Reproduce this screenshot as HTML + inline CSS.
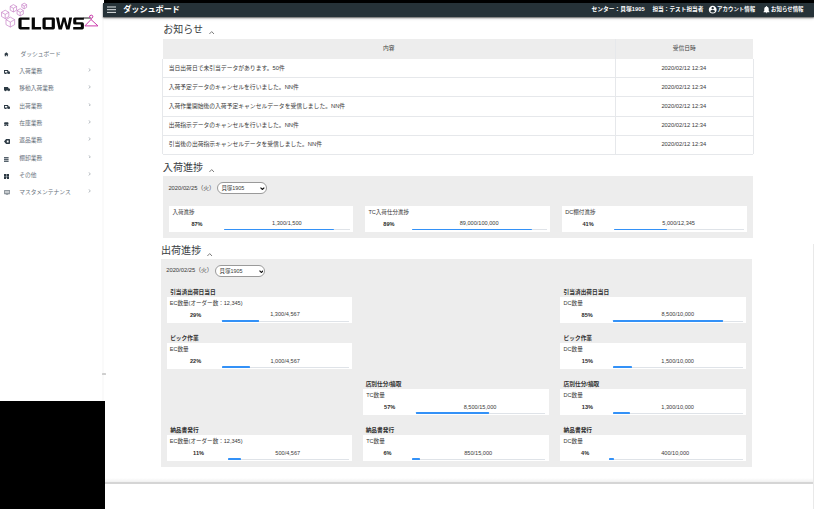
<!DOCTYPE html>
<html lang="ja">
<head>
<meta charset="utf-8">
<title>ダッシュボード</title>
<style>
html,body{margin:0;padding:0;}
body{width:814px;height:509px;overflow:hidden;position:relative;background:#fff;font-family:"Liberation Sans","Noto Sans CJK JP",sans-serif;color:#3a3a3a;}
.sidebar{position:absolute;left:0;top:0;width:103px;height:509px;background:#fff;}
.tl{position:absolute;left:0;top:0;width:814px;height:509px;overflow:hidden;}
.t{position:absolute;white-space:nowrap;line-height:1;margin-top:0.04em;font-family:"Liberation Sans","Noto Sans CJK JP",sans-serif;color:#3a3a3a;}
.t.s{color:#68727c;}
.t.w{color:#fff;}
.t.h{color:#393d43;}
.t.th{color:#444;}
.t.r{color:#3a3a3a;}
.t.l{color:#383838;}
.t.p{color:#2a2a2a;}
.t.b{color:#303030;}
</style>
</head>
<body>
<div class="sidebar">
<svg class="logo" width="104" height="36" viewBox="0 0 104 36" style="position:absolute;left:0;top:0">
<path d="M13.40 4.60 L16.60 6.45 V10.15 L13.40 12.00 L10.20 10.15 V6.45 Z M10.20 6.45 L13.40 8.30 L16.60 6.45 M13.40 8.30 V12.00 M5.20 10.20 L8.84 12.30 V16.50 L5.20 18.60 L1.56 16.50 V12.30 Z M1.56 12.30 L5.20 14.40 L8.84 12.30 M5.20 14.40 V18.60 M20.20 8.70 L23.32 10.50 V14.10 L20.20 15.90 L17.08 14.10 V10.50 Z M17.08 10.50 L20.20 12.30 L23.32 10.50 M20.20 12.30 V15.90 M10.30 17.10 L14.63 19.60 V24.60 L10.30 27.10 L5.97 24.60 V19.60 Z M5.97 19.60 L10.30 22.10 L14.63 19.60 M10.30 22.10 V27.10 M24.20 3.20 L26.62 4.60 V7.40 L24.20 8.80 L21.78 7.40 V4.60 Z M21.78 4.60 L24.20 6.00 L26.62 4.60 M24.20 6.00 V8.80" fill="none" stroke="#bd6cbd" stroke-width="0.6" stroke-linejoin="round"/>
<g fill="#070707" fill-rule="evenodd">
<path d="M20.2 17.5 H29.5 V19.8 H21.6 V27.1 H29.5 V29.4 H20.2 Q18.4 29.4 18.4 27.6 V19.3 Q18.4 17.5 20.2 17.5 Z"/>
<path d="M31.7 17.5 H34.9 V27.1 H41.1 V29.4 H31.7 Z"/>
<path d="M44.2 17.5 H53.2 Q54.9 17.5 54.9 19.2 V27.7 Q54.9 29.4 53.2 29.4 H44.2 Q42.5 29.4 42.5 27.7 V19.2 Q42.5 17.5 44.2 17.5 Z M45.7 19.8 V27.1 H51.7 V19.8 Z"/>
<path d="M56 17.5 H58.9 L60.5 26 L62.7 17.5 H65.4 L67.6 26 L69.2 17.5 H72.1 L69.5 29.4 H66.2 L64.05 21.4 L61.9 29.4 H58.6 Z"/>
<path d="M74.8 17.5 H83.9 V19.8 H76.3 V22.3 H82.3 Q83.9 22.3 83.9 23.9 V27.8 Q83.9 29.4 82.3 29.4 H73.2 V27.1 H80.8 V24.6 H74.8 Q73.2 24.6 73.2 23 V19.1 Q73.2 17.5 74.8 17.5 Z"/>
</g>
<path d="M83.5 18.0 H90.8" stroke="#111" stroke-width="0.9" fill="none"/>
<path d="M89.5 17.4 Q89.1 15.2 91.2 15.1 Q93.1 15.2 92.9 16.9 Q92.7 18.1 91 18.4 V19.5 L84.9 25.9 H98 L91 19.5" fill="none" stroke="#cb3cab" stroke-width="1.0" stroke-linecap="round" stroke-linejoin="round"/>
</svg>
<svg style="position:absolute;left:4.40px;top:52.15px" width="4.6" height="4.6" viewBox="0 0 12 12" preserveAspectRatio="none"><path fill="#2d3a44" d="M6 0.6 L0.2 6 H2 V11.4 H5 V7.8 H7 V11.4 H10 V6 H11.8 Z"/></svg>
<svg style="position:absolute;left:3.85px;top:70.10px" width="6.1" height="4.4" viewBox="0 0 12.2 8.8" preserveAspectRatio="none"><path fill="#2d3a44" fill-rule="evenodd" d="M0 0 H8.4 V2.6 H10.4 L12.2 4.8 V7.2 H11.2 A1.45 1.45 0 0 1 8.3 7.2 H4.5 A1.45 1.45 0 0 1 1.6 7.2 H0 Z M1.9 1.9 V4.9 H6.5 V1.9 Z"/></svg>
<svg style="position:absolute;left:88.0px;top:67.90px" width="3.0" height="3.8" viewBox="0 0 6 8"><path d="M1.2 0.8 L4.8 4 L1.2 7.2" fill="none" stroke="#9aa2a9" stroke-width="1.5"/></svg>
<svg style="position:absolute;left:3.85px;top:87.40px" width="6.1" height="4.4" viewBox="0 0 12.2 8.8" preserveAspectRatio="none"><path fill="#2d3a44" d="M0 0 H8.4 V2.6 H10.4 L12.2 4.8 V7.2 H11.2 A1.45 1.45 0 0 1 8.3 7.2 H4.5 A1.45 1.45 0 0 1 1.6 7.2 H0 Z"/></svg>
<svg style="position:absolute;left:88.0px;top:85.20px" width="3.0" height="3.8" viewBox="0 0 6 8"><path d="M1.2 0.8 L4.8 4 L1.2 7.2" fill="none" stroke="#9aa2a9" stroke-width="1.5"/></svg>
<svg style="position:absolute;left:3.85px;top:104.80px" width="6.1" height="4.4" viewBox="0 0 12.2 8.8" preserveAspectRatio="none"><path fill="#2d3a44" fill-rule="evenodd" d="M0 0 H8.4 V2.6 H10.4 L12.2 4.8 V7.2 H11.2 A1.45 1.45 0 0 1 8.3 7.2 H4.5 A1.45 1.45 0 0 1 1.6 7.2 H0 Z M1.9 1.9 V4.9 H6.5 V1.9 Z"/></svg>
<svg style="position:absolute;left:88.0px;top:102.60px" width="3.0" height="3.8" viewBox="0 0 6 8"><path d="M1.2 0.8 L4.8 4 L1.2 7.2" fill="none" stroke="#9aa2a9" stroke-width="1.5"/></svg>
<svg style="position:absolute;left:4.00px;top:121.80px" width="4.6" height="4.6" viewBox="0 0 12 12" preserveAspectRatio="none"><path fill="#2d3a44" d="M1.2 0.4 H10.8 L12 5 H0 Z M0.9 5.6 H11.1 V11.6 H7.4 V8.6 H4.6 V11.6 H0.9 Z"/></svg>
<svg style="position:absolute;left:88.0px;top:119.80px" width="3.0" height="3.8" viewBox="0 0 6 8"><path d="M1.2 0.8 L4.8 4 L1.2 7.2" fill="none" stroke="#9aa2a9" stroke-width="1.5"/></svg>
<svg style="position:absolute;left:3.60px;top:139.25px" width="6.0" height="4.9" viewBox="0 0 12 10" preserveAspectRatio="none"><path fill="#2d3a44" fill-rule="evenodd" d="M4.2 0 H10.6 Q12 0 12 1.4 V8.6 Q12 10 10.6 10 H4.2 L0 5 Z M5.6 3 V7 H9.2 V3 Z"/></svg>
<svg style="position:absolute;left:88.0px;top:137.20px" width="3.0" height="3.8" viewBox="0 0 6 8"><path d="M1.2 0.8 L4.8 4 L1.2 7.2" fill="none" stroke="#9aa2a9" stroke-width="1.5"/></svg>
<svg style="position:absolute;left:4.30px;top:156.50px" width="4.6" height="5.0" viewBox="0 0 10 10" preserveAspectRatio="none"><path fill="#56626c" d="M0 0 H10 V2.6 H0 Z M0 3.7 H10 V6.3 H0 Z M0 7.4 H10 V10 H0 Z"/></svg>
<svg style="position:absolute;left:88.0px;top:154.50px" width="3.0" height="3.8" viewBox="0 0 6 8"><path d="M1.2 0.8 L4.8 4 L1.2 7.2" fill="none" stroke="#9aa2a9" stroke-width="1.5"/></svg>
<svg style="position:absolute;left:4.10px;top:173.80px" width="5.3" height="5.2" viewBox="0 0 12 12" preserveAspectRatio="none"><path fill="#2d3a44" d="M0 0 H5.5 V5.5 H0 Z M6.5 0 H12 V5.5 H6.5 Z M0 6.5 H5.5 V12 H0 Z M6.5 6.5 H12 V12 H6.5 Z"/></svg>
<svg style="position:absolute;left:88.0px;top:171.90px" width="3.0" height="3.8" viewBox="0 0 6 8"><path d="M1.2 0.8 L4.8 4 L1.2 7.2" fill="none" stroke="#9aa2a9" stroke-width="1.5"/></svg>
<svg style="position:absolute;left:3.80px;top:190.30px" width="6.1" height="5.2" viewBox="0 0 12 10" preserveAspectRatio="none"><path fill="#8f979e" fill-rule="evenodd" d="M0.8 0 H11.2 Q12 0 12 0.8 V7.4 Q12 8.2 11.2 8.2 H7.4 V9.2 H9 V10 H3 V9.2 H4.6 V8.2 H0.8 Q0 8.2 0 7.4 V0.8 Q0 0 0.8 0 Z M2 2 V3.1 H10 V2 Z M2 4.4 V5.5 H10 V4.4 Z"/></svg>
<svg style="position:absolute;left:88.0px;top:189.30px" width="3.0" height="3.8" viewBox="0 0 6 8"><path d="M1.2 0.8 L4.8 4 L1.2 7.2" fill="none" stroke="#9aa2a9" stroke-width="1.5"/></svg>
</div>
<div style="position:absolute;left:102.40px;top:19.00px;width:2.00px;height:382.00px;background:linear-gradient(to right,#ffffff,#f5f5f5,#ffffff);"></div>
<div style="position:absolute;left:102.30px;top:373.30px;width:3.40px;height:1.50px;background:#cfcfcf;border-radius:0.5px;"></div>
<div style="position:absolute;left:103.00px;top:2.70px;width:711.00px;height:13.90px;background:#263238;box-shadow:0 0.5px 1.2px rgba(0,0,0,0.5),0 1.5px 3px rgba(0,0,0,0.18);"></div>
<div style="position:absolute;left:103.60px;top:0.00px;width:710.40px;height:2.80px;background:#000;"></div>
<svg style="position:absolute;left:107px;top:5.8px" width="9.4" height="7.4" viewBox="0 0 9.4 7.4"><path d="M0 1 H9.2 M0 3.7 H9.2 M0 6.4 H9.2" stroke="#eceff1" stroke-width="0.95" fill="none"/></svg>
<svg style="position:absolute;left:707.9px;top:4.85px" width="9.4" height="9.4" viewBox="0 0 24 24"><path fill="#fff" d="M12 2C6.48 2 2 6.48 2 12s4.48 10 10 10 10-4.48 10-10S17.52 2 12 2zm0 3c1.66 0 3 1.34 3 3s-1.34 3-3 3-3-1.34-3-3 1.34-3 3-3zm0 14.2c-2.5 0-4.71-1.28-6-3.22.03-1.99 4-3.08 6-3.08 1.99 0 5.97 1.09 6 3.08-1.29 1.94-3.5 3.22-6 3.22z"/></svg>
<svg style="position:absolute;left:762.15px;top:5.4px" width="9" height="9" viewBox="0 0 24 24"><path fill="#fff" d="M12 22c1.1 0 2-.9 2-2h-4c0 1.1.89 2 2 2zm6-6v-5c0-3.07-1.64-5.64-4.5-6.32V4c0-.83-.67-1.500-1.500-1.500s-1.500.67-1.500 1.500v.68C7.630 5.360 6 7.920 6 11v5l-2 2v1h16v-1l-2-2z"/></svg>
<svg style="position:absolute;left:209.30px;top:31.40px" width="5.4" height="3.4" viewBox="0 0 5.4 3.4"><path d="M0.4 3 L2.7 0.6 L5 3" fill="none" stroke="#505050" stroke-width="0.75"/></svg>
<svg style="position:absolute;left:209.30px;top:169.20px" width="5.4" height="3.4" viewBox="0 0 5.4 3.4"><path d="M0.4 3 L2.7 0.6 L5 3" fill="none" stroke="#505050" stroke-width="0.75"/></svg>
<svg style="position:absolute;left:207.30px;top:252.80px" width="5.4" height="3.4" viewBox="0 0 5.4 3.4"><path d="M0.4 3 L2.7 0.6 L5 3" fill="none" stroke="#505050" stroke-width="0.75"/></svg>
<div style="position:absolute;left:162.50px;top:38.80px;width:590.90px;height:19.80px;background:#ededed;"></div>
<div style="position:absolute;left:162.50px;top:77.35px;width:590.90px;height:0.50px;background:#e6e8eb;"></div>
<div style="position:absolute;left:162.50px;top:96.45px;width:590.90px;height:0.50px;background:#e6e8eb;"></div>
<div style="position:absolute;left:162.50px;top:115.55px;width:590.90px;height:0.50px;background:#e6e8eb;"></div>
<div style="position:absolute;left:162.50px;top:134.75px;width:590.90px;height:0.50px;background:#e6e8eb;"></div>
<div style="position:absolute;left:162.50px;top:153.95px;width:590.90px;height:0.50px;background:#e6e8eb;"></div>
<div style="position:absolute;left:615.05px;top:38.80px;width:0.50px;height:115.40px;background:#e6e8eb;"></div>
<div style="position:absolute;left:753.15px;top:58.60px;width:0.50px;height:95.60px;background:#e6e8eb;"></div>
<div style="position:absolute;left:162.25px;top:58.60px;width:0.50px;height:95.60px;background:#e6e8eb;"></div>
<div style="position:absolute;left:162.50px;top:176.30px;width:590.60px;height:61.40px;background:#ededed;"></div>
<div style="position:absolute;left:217.20px;top:181.80px;width:49.40px;height:12.70px;box-sizing:border-box;border:0.5px solid #9a9a9a;border-radius:6.5px;background:#fff"></div>
<svg style="position:absolute;left:260.30px;top:186.95px" width="4.8" height="3.2" viewBox="0 0 4.8 3.2"><path d="M0.5 0.6 L2.4 2.5 L4.3 0.6" fill="none" stroke="#111" stroke-width="1.15"/></svg>
<div style="position:absolute;left:168.70px;top:205.50px;width:184.40px;height:26.20px;background:#fff;"></div>
<div style="position:absolute;left:224.30px;top:229.00px;width:125.70px;height:0.60px;background:#dfe3e8;"></div>
<div style="position:absolute;left:224.30px;top:228.55px;width:109.36px;height:1.50px;background:#3391f7;border-radius:0.4px;"></div>
<div style="position:absolute;left:364.70px;top:205.50px;width:185.30px;height:26.20px;background:#fff;"></div>
<div style="position:absolute;left:411.60px;top:229.00px;width:135.20px;height:0.60px;background:#dfe3e8;"></div>
<div style="position:absolute;left:411.60px;top:228.55px;width:120.33px;height:1.50px;background:#3391f7;border-radius:0.4px;"></div>
<div style="position:absolute;left:561.90px;top:205.50px;width:185.10px;height:26.20px;background:#fff;"></div>
<div style="position:absolute;left:614.00px;top:229.00px;width:129.70px;height:0.60px;background:#dfe3e8;"></div>
<div style="position:absolute;left:614.00px;top:228.55px;width:53.18px;height:1.50px;background:#3391f7;border-radius:0.4px;"></div>
<div style="position:absolute;left:160.50px;top:259.30px;width:591.60px;height:207.70px;background:#ededed;"></div>
<div style="position:absolute;left:215.30px;top:264.90px;width:49.50px;height:12.50px;box-sizing:border-box;border:0.5px solid #9a9a9a;border-radius:6.5px;background:#fff"></div>
<svg style="position:absolute;left:258.50px;top:269.95px" width="4.8" height="3.2" viewBox="0 0 4.8 3.2"><path d="M0.5 0.6 L2.4 2.5 L4.3 0.6" fill="none" stroke="#111" stroke-width="1.15"/></svg>
<div style="position:absolute;left:166.80px;top:297.00px;width:184.80px;height:26.10px;background:#fff;"></div>
<div style="position:absolute;left:222.20px;top:320.50px;width:126.40px;height:0.60px;background:#dfe3e8;"></div>
<div style="position:absolute;left:222.20px;top:320.05px;width:36.66px;height:1.50px;background:#3391f7;border-radius:0.4px;"></div>
<div style="position:absolute;left:166.80px;top:343.10px;width:184.80px;height:26.10px;background:#fff;"></div>
<div style="position:absolute;left:222.20px;top:366.60px;width:126.40px;height:0.60px;background:#dfe3e8;"></div>
<div style="position:absolute;left:222.20px;top:366.15px;width:27.81px;height:1.50px;background:#3391f7;border-radius:0.4px;"></div>
<div style="position:absolute;left:166.80px;top:435.30px;width:184.80px;height:26.10px;background:#fff;"></div>
<div style="position:absolute;left:228.00px;top:458.80px;width:120.60px;height:0.60px;background:#dfe3e8;"></div>
<div style="position:absolute;left:228.00px;top:458.35px;width:13.27px;height:1.50px;background:#3391f7;border-radius:0.4px;"></div>
<div style="position:absolute;left:363.00px;top:389.20px;width:185.90px;height:26.10px;background:#fff;"></div>
<div style="position:absolute;left:415.70px;top:412.70px;width:129.20px;height:0.60px;background:#dfe3e8;"></div>
<div style="position:absolute;left:415.70px;top:412.25px;width:73.64px;height:1.50px;background:#3391f7;border-radius:0.4px;"></div>
<div style="position:absolute;left:363.00px;top:435.30px;width:185.90px;height:26.10px;background:#fff;"></div>
<div style="position:absolute;left:411.60px;top:458.80px;width:133.30px;height:0.60px;background:#dfe3e8;"></div>
<div style="position:absolute;left:411.60px;top:458.35px;width:8.00px;height:1.50px;background:#3391f7;border-radius:0.4px;"></div>
<div style="position:absolute;left:560.00px;top:297.00px;width:186.00px;height:26.10px;background:#fff;"></div>
<div style="position:absolute;left:613.00px;top:320.50px;width:129.70px;height:0.60px;background:#dfe3e8;"></div>
<div style="position:absolute;left:613.00px;top:320.05px;width:110.25px;height:1.50px;background:#3391f7;border-radius:0.4px;"></div>
<div style="position:absolute;left:560.00px;top:343.10px;width:186.00px;height:26.10px;background:#fff;"></div>
<div style="position:absolute;left:613.00px;top:366.60px;width:129.70px;height:0.60px;background:#dfe3e8;"></div>
<div style="position:absolute;left:613.00px;top:366.15px;width:19.46px;height:1.50px;background:#3391f7;border-radius:0.4px;"></div>
<div style="position:absolute;left:560.00px;top:389.20px;width:186.00px;height:26.10px;background:#fff;"></div>
<div style="position:absolute;left:613.00px;top:412.70px;width:129.70px;height:0.60px;background:#dfe3e8;"></div>
<div style="position:absolute;left:613.00px;top:412.25px;width:16.86px;height:1.50px;background:#3391f7;border-radius:0.4px;"></div>
<div style="position:absolute;left:560.00px;top:435.30px;width:186.00px;height:26.10px;background:#fff;"></div>
<div style="position:absolute;left:608.70px;top:458.80px;width:134.00px;height:0.60px;background:#dfe3e8;"></div>
<div style="position:absolute;left:608.70px;top:458.35px;width:5.36px;height:1.50px;background:#3391f7;border-radius:0.4px;"></div>
<div style="position:absolute;left:105.00px;top:478.20px;width:708.00px;height:4.20px;background:linear-gradient(to bottom,rgba(0,0,0,0),rgba(0,0,0,0.06));"></div>
<div style="position:absolute;left:105.00px;top:482.30px;width:708.00px;height:1.60px;background:#d5d5d5;"></div>
<div style="position:absolute;left:812.90px;top:244.00px;width:0.90px;height:265.00px;background:#e9e9e9;"></div>
<div style="position:absolute;left:0.00px;top:401.00px;width:105.00px;height:108.00px;background:#000;"></div>
<div class="tl">
<div class="t s" style="left:20.5px;top:51.3px;font-size:5.75px;">ダッシュボード</div>
<div class="t s" style="left:19.2px;top:68.8px;font-size:5.75px;">入荷業務</div>
<div class="t s" style="left:19.2px;top:86.1px;font-size:5.75px;">移動入荷業務</div>
<div class="t s" style="left:19.2px;top:103.5px;font-size:5.75px;">出荷業務</div>
<div class="t s" style="left:19.2px;top:120.7px;font-size:5.75px;">在庫業務</div>
<div class="t s" style="left:19.2px;top:138.1px;font-size:5.75px;">返品業務</div>
<div class="t s" style="left:19.2px;top:155.4px;font-size:5.75px;">棚卸業務</div>
<div class="t s" style="left:19.2px;top:172.8px;font-size:5.75px;">その他</div>
<div class="t s" style="left:19.2px;top:190.2px;font-size:5.75px;">マスタメンテナンス</div>
<div class="t w" style="left:123.2px;top:5.5px;font-size:8.12px;font-weight:bold;">ダッシュボード</div>
<div class="t w" style="left:591.6px;top:6.7px;font-size:5.75px;font-weight:bold;">センター：貝塚1905</div>
<div class="t w" style="left:652.4px;top:6.8px;font-size:5.68px;font-weight:bold;">担当：テスト担当者</div>
<div class="t w" style="left:717.1px;top:6.9px;font-size:5.45px;font-weight:bold;">アカウント情報</div>
<div class="t w" style="left:771.0px;top:6.9px;font-size:5.45px;font-weight:bold;">お知らせ情報</div>
<div class="t h" style="left:163.2px;top:24.9px;font-size:10.00px;">お知らせ</div>
<div class="t h" style="left:162.8px;top:162.5px;font-size:10.10px;">入荷進捗</div>
<div class="t h" style="left:160.9px;top:245.9px;font-size:10.10px;">出荷進捗</div>
<div class="t th" style="left:383.1px;top:46.0px;font-size:5.75px;">内容</div>
<div class="t th" style="left:672.8px;top:46.0px;font-size:5.75px;">受信日時</div>
<div class="t r" style="left:168.7px;top:65.3px;font-size:5.80px;">当日出荷日で未引当データがあります。50件</div>
<div class="t r" style="left:661.4px;top:65.4px;font-size:5.78px;">2020/02/12 12:34</div>
<div class="t r" style="left:168.7px;top:84.3px;font-size:5.80px;">入荷予定データのキャンセルを行いました。NN件</div>
<div class="t r" style="left:661.4px;top:84.5px;font-size:5.78px;">2020/02/12 12:34</div>
<div class="t r" style="left:168.7px;top:103.4px;font-size:5.80px;">入荷作業開始後の入荷予定キャンセルデータを受信しました。NN件</div>
<div class="t r" style="left:661.4px;top:103.6px;font-size:5.78px;">2020/02/12 12:34</div>
<div class="t r" style="left:168.7px;top:122.6px;font-size:5.80px;">出荷指示データのキャンセルを行いました。NN件</div>
<div class="t r" style="left:661.4px;top:122.7px;font-size:5.78px;">2020/02/12 12:34</div>
<div class="t r" style="left:168.7px;top:141.8px;font-size:5.80px;">引当後の出荷指示キャンセルデータを受信しました。NN件</div>
<div class="t r" style="left:661.4px;top:141.9px;font-size:5.78px;">2020/02/12 12:34</div>
<div class="t r" style="left:168.4px;top:185.5px;font-size:5.80px;">2020/02/25（火）</div>
<div class="t r" style="left:221.4px;top:185.7px;font-size:5.45px;">貝塚1905</div>
<div class="t l" style="left:172.4px;top:209.3px;font-size:5.55px;">入荷進捗</div>
<div class="t p" style="left:191.4px;top:221.3px;font-size:5.60px;font-weight:bold;">87%</div>
<div class="t r" style="left:272.1px;top:220.7px;font-size:5.60px;">1,300/1,500</div>
<div class="t l" style="left:368.4px;top:209.3px;font-size:5.55px;">TC入荷仕分進捗</div>
<div class="t p" style="left:383.3px;top:221.3px;font-size:5.60px;font-weight:bold;">89%</div>
<div class="t r" style="left:459.7px;top:220.7px;font-size:5.60px;">89,000/100,000</div>
<div class="t l" style="left:565.3px;top:209.3px;font-size:5.55px;">DC棚付進捗</div>
<div class="t p" style="left:582.5px;top:221.3px;font-size:5.60px;font-weight:bold;">41%</div>
<div class="t r" style="left:662.3px;top:220.7px;font-size:5.60px;">5,000/12,345</div>
<div class="t r" style="left:166.2px;top:268.2px;font-size:5.80px;">2020/02/25（火）</div>
<div class="t r" style="left:219.5px;top:268.7px;font-size:5.45px;">貝塚1905</div>
<div class="t b" style="left:170.2px;top:289.8px;font-size:5.70px;font-weight:bold;">引当済出荷日当日</div>
<div class="t l" style="left:169.8px;top:300.8px;font-size:5.55px;">EC数量(オーダー数：12,345)</div>
<div class="t p" style="left:190.0px;top:312.8px;font-size:5.60px;font-weight:bold;">29%</div>
<div class="t r" style="left:270.2px;top:312.2px;font-size:5.60px;">1,300/4,567</div>
<div class="t b" style="left:170.2px;top:335.9px;font-size:5.70px;font-weight:bold;">ピック作業</div>
<div class="t l" style="left:169.8px;top:346.9px;font-size:5.55px;">EC数量</div>
<div class="t p" style="left:190.0px;top:358.9px;font-size:5.60px;font-weight:bold;">22%</div>
<div class="t r" style="left:270.4px;top:358.3px;font-size:5.60px;">1,000/4,567</div>
<div class="t b" style="left:170.2px;top:428.1px;font-size:5.70px;font-weight:bold;">納品書発行</div>
<div class="t l" style="left:169.8px;top:439.1px;font-size:5.55px;">EC数量(オーダー数：12,345)</div>
<div class="t p" style="left:193.1px;top:451.1px;font-size:5.60px;font-weight:bold;">11%</div>
<div class="t r" style="left:275.3px;top:450.5px;font-size:5.60px;">500/4,567</div>
<div class="t b" style="left:365.7px;top:382.0px;font-size:5.70px;font-weight:bold;">店別仕分/摘取</div>
<div class="t l" style="left:366.2px;top:393.0px;font-size:5.55px;">TC数量</div>
<div class="t p" style="left:384.1px;top:405.0px;font-size:5.60px;font-weight:bold;">57%</div>
<div class="t r" style="left:463.7px;top:404.4px;font-size:5.60px;">8,500/15,000</div>
<div class="t b" style="left:365.7px;top:428.1px;font-size:5.70px;font-weight:bold;">納品書発行</div>
<div class="t l" style="left:366.2px;top:439.1px;font-size:5.55px;">TC数量</div>
<div class="t p" style="left:383.5px;top:451.1px;font-size:5.60px;font-weight:bold;">6%</div>
<div class="t r" style="left:464.2px;top:450.5px;font-size:5.60px;">850/15,000</div>
<div class="t b" style="left:563.6px;top:289.8px;font-size:5.70px;font-weight:bold;">引当済出荷日当日</div>
<div class="t l" style="left:563.6px;top:300.8px;font-size:5.55px;">DC数量</div>
<div class="t p" style="left:581.6px;top:312.8px;font-size:5.60px;font-weight:bold;">85%</div>
<div class="t r" style="left:661.4px;top:312.2px;font-size:5.60px;">8,500/10,000</div>
<div class="t b" style="left:563.6px;top:335.9px;font-size:5.70px;font-weight:bold;">ピック作業</div>
<div class="t l" style="left:563.6px;top:346.9px;font-size:5.55px;">DC数量</div>
<div class="t p" style="left:581.8px;top:358.9px;font-size:5.60px;font-weight:bold;">15%</div>
<div class="t r" style="left:661.3px;top:358.3px;font-size:5.60px;">1,500/10,000</div>
<div class="t b" style="left:563.6px;top:382.0px;font-size:5.70px;font-weight:bold;">店別仕分/摘取</div>
<div class="t l" style="left:563.6px;top:393.0px;font-size:5.55px;">DC数量</div>
<div class="t p" style="left:581.8px;top:405.0px;font-size:5.60px;font-weight:bold;">13%</div>
<div class="t r" style="left:661.3px;top:404.4px;font-size:5.60px;">1,300/10,000</div>
<div class="t b" style="left:563.6px;top:428.1px;font-size:5.70px;font-weight:bold;">納品書発行</div>
<div class="t l" style="left:563.6px;top:439.1px;font-size:5.55px;">DC数量</div>
<div class="t p" style="left:581.1px;top:451.1px;font-size:5.60px;font-weight:bold;">4%</div>
<div class="t r" style="left:661.2px;top:450.5px;font-size:5.60px;">400/10,000</div>
</div>
</body>
</html>
